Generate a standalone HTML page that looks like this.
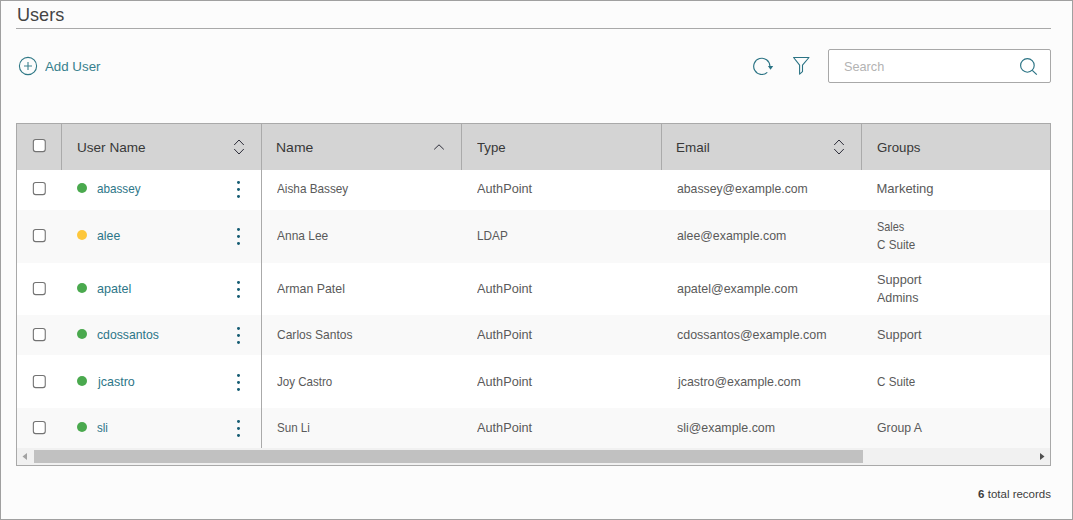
<!DOCTYPE html>
<html><head><meta charset="utf-8">
<style>
*{margin:0;padding:0;box-sizing:border-box}
html,body{width:1073px;height:520px;overflow:hidden;background:#fcfcfc}
body{position:relative;font-family:"Liberation Sans",sans-serif}
.t{position:absolute;white-space:nowrap;transform-origin:0 0}
.a{position:absolute}
</style></head><body>
<div class="a" style="left:0;top:0;width:1073px;height:520px;border:1px solid #a0a0a0"></div>
<div class="a" style="left:16px;top:28px;width:1035px;height:1px;background:#a9a9a9"></div>
<svg class="a" style="left:0;top:0" width="1073" height="120">
<circle cx="28" cy="66" r="8.6" fill="none" stroke="#2f7886" stroke-width="1.1"/>
<path d="M24 66H32M28 62V70" stroke="#3a808d" stroke-width="1.1" fill="none"/>
<path d="M767.3 72.3 A8.1 8.1 0 1 1 769.9 66" fill="none" stroke="#2a7384" stroke-width="1.15"/>
<path d="M767.9 65.9 L773.2 65.9 L770.55 69.8 Z" fill="#2a7384"/>
<path d="M793.6 57.5 L809 57.5 L802.5 65.2 L802.5 71.6 L799.6 74.2 L799.6 65.2 Z" fill="none" stroke="#2a7384" stroke-width="1.1" stroke-linejoin="round"/>
</svg>
<div class="a" style="left:828px;top:49px;width:223px;height:34px;border:1px solid #a8a8a8;border-radius:2px;background:#fff"></div>
<svg class="a" style="left:1000px;top:50px" width="50" height="32"><circle cx="27.4" cy="15.4" r="6.8" fill="none" stroke="#2a7384" stroke-width="1.15"/><path d="M32.3 20.4 L36.8 24.6" stroke="#2a7384" stroke-width="1.2"/></svg>
<div class="a" style="left:16px;top:123px;width:1035px;height:343px;border:1px solid #a9a9a9;background:#fff"></div>
<div class="a" style="left:17px;top:124px;width:1033px;height:46px;background:#d4d4d4"></div>
<div class="a" style="left:61px;top:124px;width:1px;height:46px;background:#aaaaaa"></div>
<div class="a" style="left:261px;top:124px;width:1px;height:46px;background:#aaaaaa"></div>
<div class="a" style="left:461px;top:124px;width:1px;height:46px;background:#aaaaaa"></div>
<div class="a" style="left:661px;top:124px;width:1px;height:46px;background:#aaaaaa"></div>
<div class="a" style="left:861px;top:124px;width:1px;height:46px;background:#aaaaaa"></div>
<svg class="a" style="left:31px;top:137px" width="18" height="18"><rect x="2.35" y="2.5" width="11.9" height="12.1" rx="2.3" fill="#fff" stroke="#737373" stroke-width="1.1"/></svg>
<svg class="a" style="left:0;top:120px" width="1073" height="50">
<path d="M234.2 25 L239 20 L243.8 25 M234.2 29 L239 34 L243.8 29" fill="none" stroke="#2e2e3a" stroke-width="1"/>
<path d="M434.2 29.4 L439 24.8 L443.8 29.4" fill="none" stroke="#2e2e3a" stroke-width="1"/>
<path d="M834.2 25 L839 20 L843.8 25 M834.2 29 L839 34 L843.8 29" fill="none" stroke="#2e2e3a" stroke-width="1"/>
</svg>
<div class="a" style="left:17px;top:170px;width:1033px;height:40px;background:#ffffff"></div>
<svg class="a" style="left:31px;top:180px" width="18" height="18"><rect x="2.35" y="2.5" width="11.9" height="12.1" rx="2.3" fill="#fff" stroke="#737373" stroke-width="1.1"/></svg>
<div class="a" style="left:77px;top:183px;width:10px;height:10px;border-radius:50%;background:#4aa94e"></div>
<div class="a" style="left:237.3px;top:181.45px;width:2.9px;height:2.9px;border-radius:50%;background:#175d74"></div>
<div class="a" style="left:237.3px;top:188.05px;width:2.9px;height:2.9px;border-radius:50%;background:#175d74"></div>
<div class="a" style="left:237.3px;top:194.65px;width:2.9px;height:2.9px;border-radius:50%;background:#175d74"></div>
<div class="a" style="left:17px;top:210px;width:1033px;height:53px;background:#f9f9f9"></div>
<svg class="a" style="left:31px;top:227px" width="18" height="18"><rect x="2.35" y="2.5" width="11.9" height="12.1" rx="2.3" fill="#fff" stroke="#737373" stroke-width="1.1"/></svg>
<div class="a" style="left:77px;top:230px;width:10px;height:10px;border-radius:50%;background:#fdc73c"></div>
<div class="a" style="left:237.3px;top:228.45px;width:2.9px;height:2.9px;border-radius:50%;background:#175d74"></div>
<div class="a" style="left:237.3px;top:235.05px;width:2.9px;height:2.9px;border-radius:50%;background:#175d74"></div>
<div class="a" style="left:237.3px;top:241.65px;width:2.9px;height:2.9px;border-radius:50%;background:#175d74"></div>
<div class="a" style="left:17px;top:263px;width:1033px;height:52px;background:#ffffff"></div>
<svg class="a" style="left:31px;top:280px" width="18" height="18"><rect x="2.35" y="2.5" width="11.9" height="12.1" rx="2.3" fill="#fff" stroke="#737373" stroke-width="1.1"/></svg>
<div class="a" style="left:77px;top:283px;width:10px;height:10px;border-radius:50%;background:#4aa94e"></div>
<div class="a" style="left:237.3px;top:281.45px;width:2.9px;height:2.9px;border-radius:50%;background:#175d74"></div>
<div class="a" style="left:237.3px;top:288.05px;width:2.9px;height:2.9px;border-radius:50%;background:#175d74"></div>
<div class="a" style="left:237.3px;top:294.65px;width:2.9px;height:2.9px;border-radius:50%;background:#175d74"></div>
<div class="a" style="left:17px;top:315px;width:1033px;height:40px;background:#f9f9f9"></div>
<svg class="a" style="left:31px;top:326px" width="18" height="18"><rect x="2.35" y="2.5" width="11.9" height="12.1" rx="2.3" fill="#fff" stroke="#737373" stroke-width="1.1"/></svg>
<div class="a" style="left:77px;top:329px;width:10px;height:10px;border-radius:50%;background:#4aa94e"></div>
<div class="a" style="left:237.3px;top:327.45px;width:2.9px;height:2.9px;border-radius:50%;background:#175d74"></div>
<div class="a" style="left:237.3px;top:334.05px;width:2.9px;height:2.9px;border-radius:50%;background:#175d74"></div>
<div class="a" style="left:237.3px;top:340.65px;width:2.9px;height:2.9px;border-radius:50%;background:#175d74"></div>
<div class="a" style="left:17px;top:355px;width:1033px;height:53px;background:#ffffff"></div>
<svg class="a" style="left:31px;top:373px" width="18" height="18"><rect x="2.35" y="2.5" width="11.9" height="12.1" rx="2.3" fill="#fff" stroke="#737373" stroke-width="1.1"/></svg>
<div class="a" style="left:77px;top:376px;width:10px;height:10px;border-radius:50%;background:#4aa94e"></div>
<div class="a" style="left:237.3px;top:374.45px;width:2.9px;height:2.9px;border-radius:50%;background:#175d74"></div>
<div class="a" style="left:237.3px;top:381.05px;width:2.9px;height:2.9px;border-radius:50%;background:#175d74"></div>
<div class="a" style="left:237.3px;top:387.65px;width:2.9px;height:2.9px;border-radius:50%;background:#175d74"></div>
<div class="a" style="left:17px;top:408px;width:1033px;height:40px;background:#f9f9f9"></div>
<svg class="a" style="left:31px;top:419px" width="18" height="18"><rect x="2.35" y="2.5" width="11.9" height="12.1" rx="2.3" fill="#fff" stroke="#737373" stroke-width="1.1"/></svg>
<div class="a" style="left:77px;top:422px;width:10px;height:10px;border-radius:50%;background:#4aa94e"></div>
<div class="a" style="left:237.3px;top:420.45px;width:2.9px;height:2.9px;border-radius:50%;background:#175d74"></div>
<div class="a" style="left:237.3px;top:427.05px;width:2.9px;height:2.9px;border-radius:50%;background:#175d74"></div>
<div class="a" style="left:237.3px;top:433.65px;width:2.9px;height:2.9px;border-radius:50%;background:#175d74"></div>
<div class="t" style="left:16.72px;top:5.62px;font-size:18.4px;line-height:18.4px;color:#444444;transform:scaleX(0.9823);">Users</div>
<div class="t" style="left:45.00px;top:59.66px;font-size:13.4px;line-height:13.4px;color:#36808d;transform:scaleX(0.9936);">Add User</div>
<div class="t" style="left:844.20px;top:60.00px;font-size:13px;line-height:13px;color:#b3b3b3;transform:scaleX(0.9766);">Search</div>
<div class="t" style="left:76.86px;top:141.00px;font-size:13px;line-height:13px;color:#383838;transform:scaleX(1.0433);">User Name</div>
<div class="t" style="left:276.42px;top:141.00px;font-size:13px;line-height:13px;color:#383838;transform:scaleX(1.0763);">Name</div>
<div class="t" style="left:477.00px;top:141.00px;font-size:13px;line-height:13px;color:#383838;transform:scaleX(1.0160);">Type</div>
<div class="t" style="left:676.47px;top:141.00px;font-size:13px;line-height:13px;color:#383838;transform:scaleX(1.0342);">Email</div>
<div class="t" style="left:877.00px;top:141.00px;font-size:13px;line-height:13px;color:#383838;transform:scaleX(1.0202);">Groups</div>
<div class="t" style="left:97.40px;top:182.00px;font-size:13px;line-height:13px;color:#2d7688;transform:scaleX(0.8994);">abassey</div>
<div class="t" style="left:277.00px;top:182.00px;font-size:13px;line-height:13px;color:#5a5a5a;transform:scaleX(0.9046);">Aisha Bassey</div>
<div class="t" style="left:477.00px;top:182.00px;font-size:13px;line-height:13px;color:#5a5a5a;transform:scaleX(0.9778);">AuthPoint</div>
<div class="t" style="left:677.00px;top:182.00px;font-size:13px;line-height:13px;color:#5a5a5a;transform:scaleX(0.9414);">abassey@example.com</div>
<div class="t" style="left:876.50px;top:182.00px;font-size:13px;line-height:13px;color:#5a5a5a;">Marketing</div>
<div class="t" style="left:97.40px;top:229.00px;font-size:13px;line-height:13px;color:#2d7688;transform:scaleX(0.9446);">alee</div>
<div class="t" style="left:277.00px;top:229.00px;font-size:13px;line-height:13px;color:#5a5a5a;transform:scaleX(0.9200);">Anna Lee</div>
<div class="t" style="left:476.59px;top:229.00px;font-size:13px;line-height:13px;color:#5a5a5a;transform:scaleX(0.9074);">LDAP</div>
<div class="t" style="left:677.00px;top:229.00px;font-size:13px;line-height:13px;color:#5a5a5a;transform:scaleX(0.9496);">alee@example.com</div>
<div class="t" style="left:877.00px;top:220.00px;font-size:13px;line-height:13px;color:#5a5a5a;transform:scaleX(0.8389);">Sales</div>
<div class="t" style="left:877.00px;top:238.00px;font-size:13px;line-height:13px;color:#5a5a5a;transform:scaleX(0.8962);">C Suite</div>
<div class="t" style="left:97.40px;top:282.00px;font-size:13px;line-height:13px;color:#2d7688;transform:scaleX(0.9653);">apatel</div>
<div class="t" style="left:277.00px;top:282.00px;font-size:13px;line-height:13px;color:#5a5a5a;transform:scaleX(0.9491);">Arman Patel</div>
<div class="t" style="left:477.00px;top:282.00px;font-size:13px;line-height:13px;color:#5a5a5a;transform:scaleX(0.9778);">AuthPoint</div>
<div class="t" style="left:677.00px;top:282.00px;font-size:13px;line-height:13px;color:#5a5a5a;transform:scaleX(0.9593);">apatel@example.com</div>
<div class="t" style="left:877.00px;top:273.00px;font-size:13px;line-height:13px;color:#5a5a5a;transform:scaleX(0.9800);">Support</div>
<div class="t" style="left:877.00px;top:291.00px;font-size:13px;line-height:13px;color:#5a5a5a;transform:scaleX(0.9579);">Admins</div>
<div class="t" style="left:97.40px;top:328.00px;font-size:13px;line-height:13px;color:#2d7688;transform:scaleX(0.9402);">cdossantos</div>
<div class="t" style="left:277.00px;top:328.00px;font-size:13px;line-height:13px;color:#5a5a5a;transform:scaleX(0.9251);">Carlos Santos</div>
<div class="t" style="left:477.00px;top:328.00px;font-size:13px;line-height:13px;color:#5a5a5a;transform:scaleX(0.9778);">AuthPoint</div>
<div class="t" style="left:677.00px;top:328.00px;font-size:13px;line-height:13px;color:#5a5a5a;transform:scaleX(0.9567);">cdossantos@example.com</div>
<div class="t" style="left:877.00px;top:328.00px;font-size:13px;line-height:13px;color:#5a5a5a;transform:scaleX(0.9800);">Support</div>
<div class="t" style="left:98.36px;top:375.00px;font-size:13px;line-height:13px;color:#2d7688;transform:scaleX(0.9601);">jcastro</div>
<div class="t" style="left:277.00px;top:375.00px;font-size:13px;line-height:13px;color:#5a5a5a;transform:scaleX(0.8885);">Joy Castro</div>
<div class="t" style="left:477.00px;top:375.00px;font-size:13px;line-height:13px;color:#5a5a5a;transform:scaleX(0.9778);">AuthPoint</div>
<div class="t" style="left:677.95px;top:375.00px;font-size:13px;line-height:13px;color:#5a5a5a;transform:scaleX(0.9537);">jcastro@example.com</div>
<div class="t" style="left:877.00px;top:375.00px;font-size:13px;line-height:13px;color:#5a5a5a;transform:scaleX(0.8962);">C Suite</div>
<div class="t" style="left:97.40px;top:421.00px;font-size:13px;line-height:13px;color:#2d7688;transform:scaleX(0.8879);">sli</div>
<div class="t" style="left:277.00px;top:421.00px;font-size:13px;line-height:13px;color:#5a5a5a;transform:scaleX(0.8926);">Sun Li</div>
<div class="t" style="left:477.00px;top:421.00px;font-size:13px;line-height:13px;color:#5a5a5a;transform:scaleX(0.9778);">AuthPoint</div>
<div class="t" style="left:677.00px;top:421.00px;font-size:13px;line-height:13px;color:#5a5a5a;transform:scaleX(0.9544);">sli@example.com</div>
<div class="t" style="left:877.00px;top:421.00px;font-size:13px;line-height:13px;color:#5a5a5a;transform:scaleX(0.9437);">Group A</div>
<div class="a" style="left:261px;top:170px;width:1px;height:278px;background:#aaaaaa"></div>
<div class="a" style="left:17px;top:448px;width:1033px;height:17px;background:#f1f1f1"></div>
<div class="a" style="left:34px;top:450px;width:829px;height:13px;background:#c1c1c1"></div>
<svg class="a" style="left:17px;top:448px" width="1033" height="17"><path d="M5.5 8.5 L10 5 L10 12 Z" fill="#a3a3a3"/><path d="M1027.5 8.5 L1023 5 L1023 12 Z" fill="#505050"/></svg>
<div class="t" style="right:22px;top:489.27px;font-size:11.5px;line-height:11.5px;color:#3c3c3c"><b>6</b> total records</div>
</body></html>
